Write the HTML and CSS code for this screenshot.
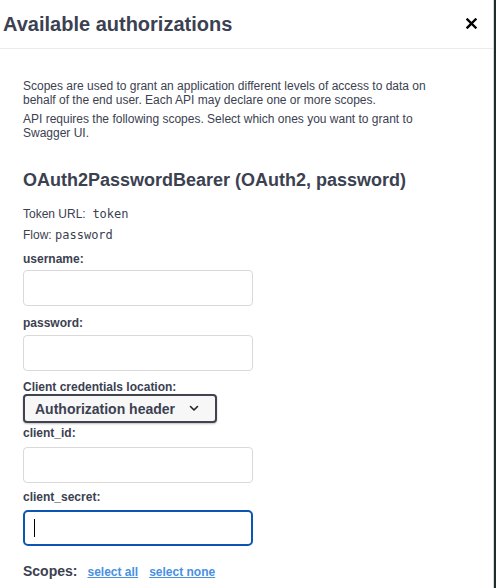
FILE: index.html
```html
<!DOCTYPE html>
<html>
<head>
<meta charset="utf-8">
<link rel="stylesheet" href="styles.css">
</head>
<body>
<div class="modal">
  <div class="modal-header">
    <h3 class="modal-title">Available authorizations</h3>
    <button class="close-btn" aria-label="Close">
      <svg width="11" height="11" viewBox="0 0 11 11"><path d="M1.5 1.5 L9.5 9.5 M9.5 1.5 L1.5 9.5" stroke="#000" stroke-width="2.4" stroke-linecap="square" fill="none"/></svg>
    </button>
  </div>
  <div class="modal-content">
    <p class="desc desc-first">Scopes are used to grant an application different levels of access to data on behalf of the end user. Each API may declare one or more scopes.</p>
    <p class="desc desc-second">API requires the following scopes. Select which ones you want to grant to Swagger UI.</p>
    <h4 class="scheme-title">OAuth2PasswordBearer (OAuth2, password)</h4>
    <p class="info info-token">Token URL:&nbsp; <code>token</code></p>
    <p class="info info-flow">Flow: <code>password</code></p>
    <label class="field-label lbl-username">username:</label>
    <div class="text-input inp-username"></div>
    <label class="field-label lbl-password">password:</label>
    <div class="text-input inp-password"></div>
    <label class="field-label lbl-location">Client credentials location:</label>
    <div class="select-box">
      <span>Authorization header</span>
      <svg width="10" height="7" viewBox="0 0 10 7"><path d="M1.5 1.5 L5 5 L8.5 1.5" stroke="#222" stroke-width="1.6" fill="none" stroke-linecap="round" stroke-linejoin="round"/></svg>
    </div>
    <label class="field-label lbl-clientid">client_id:</label>
    <div class="text-input inp-clientid"></div>
    <label class="field-label lbl-secret">client_secret:</label>
    <div class="text-input text-input-focus inp-secret"><span class="caret"></span></div>
    <div class="scopes-row">
      <h2 class="scopes-title">Scopes:</h2>
      <a class="scope-link" href="#">select all</a>
      <a class="scope-link" href="#">select none</a>
    </div>
  </div>
</div>
</body>
</html>
```

FILE: styles.css
```css
html, body {
  margin: 0;
  padding: 0;
}
body {
  background: #1f2c2c;
  font-family: "Liberation Sans", Arial, sans-serif;
  color: #3b4151;
}
.modal {
  width: 493px;
  height: 588px;
  background: #ffffff;
  border-right: 1px solid #d6d6d6;
  overflow: hidden;
}
.modal-header {
  height: 48px;
  border-bottom: 1px solid #ebebeb;
  display: flex;
  align-items: center;
  justify-content: space-between;
  padding: 0 16px 0 3px;
}
.modal-title {
  margin: 0;
  font-size: 20px;
  font-weight: 700;
  color: #3b4151;
  line-height: 23px;
  padding-top: 1px;
}
.close-btn {
  border: 0;
  background: none;
  padding: 0;
  width: 11px;
  height: 11px;
  display: flex;
  margin-top: -2px;
}
.modal-content {
  padding: 0 23px;
}
.desc {
  margin: 0;
  width: 420px;
  font-size: 12px;
  line-height: 14px;
  color: #3b4151;
}
.desc-first {
  padding-top: 30px;
}
.desc-second {
  margin-top: 5px;
}
.scheme-title {
  margin: 30px 0 0;
  font-size: 18px;
  line-height: 21px;
  font-weight: 700;
  color: #3b4151;
}
.info {
  margin: 0;
  font-size: 12px;
  line-height: 14px;
}
.info code {
  font-family: "DejaVu Sans Mono", monospace;
  font-size: 12px;
  color: #3b4151;
}
.info-token {
  margin-top: 16px;
}
.info-flow {
  margin-top: 7px;
}
.field-label {
  display: block;
  font-size: 12px;
  line-height: 14px;
  font-weight: 700;
  color: #3b4151;
}
.lbl-username { margin-top: 10px; }
.lbl-password { margin-top: 10px; }
.lbl-location { margin-top: 9px; }
.lbl-clientid { margin-top: 3px; }
.lbl-secret { margin-top: 7px; }
.text-input {
  box-sizing: border-box;
  width: 230px;
  height: 36px;
  border: 1px solid #d9d9d9;
  border-radius: 4px;
  background: #fff;
}
.inp-username { margin-top: 4px; }
.inp-password { margin-top: 5px; }
.inp-clientid { margin-top: 7px; }
.inp-secret { margin-top: 6px; }
.text-input-focus {
  border: 2px solid #0b55b5;
  border-radius: 5px;
  display: flex;
  align-items: center;
  padding-left: 9px;
}
.caret {
  display: block;
  width: 1px;
  height: 18px;
  background: #000;
}
.select-box {
  box-sizing: border-box;
  width: 194px;
  height: 29px;
  border: 2px solid #41444e;
  border-radius: 4px;
  background: #f7f7f7;
  box-shadow: 0 1px 2px rgba(0,0,0,0.25);
  display: flex;
  align-items: center;
  justify-content: space-between;
  padding: 0 16px 0 10px;
  font-size: 14px;
  font-weight: 700;
  color: #3b4151;
}
.scopes-row {
  display: flex;
  align-items: baseline;
  margin-top: 17px;
}
.scopes-title {
  margin: 0 10px 0 0;
  font-size: 14px;
  line-height: 16px;
  font-weight: 700;
  color: #3b4151;
}
.scope-link {
  font-size: 12px;
  font-weight: 700;
  color: #4990e2;
  text-decoration: underline;
  margin-right: 11px;
}
```
